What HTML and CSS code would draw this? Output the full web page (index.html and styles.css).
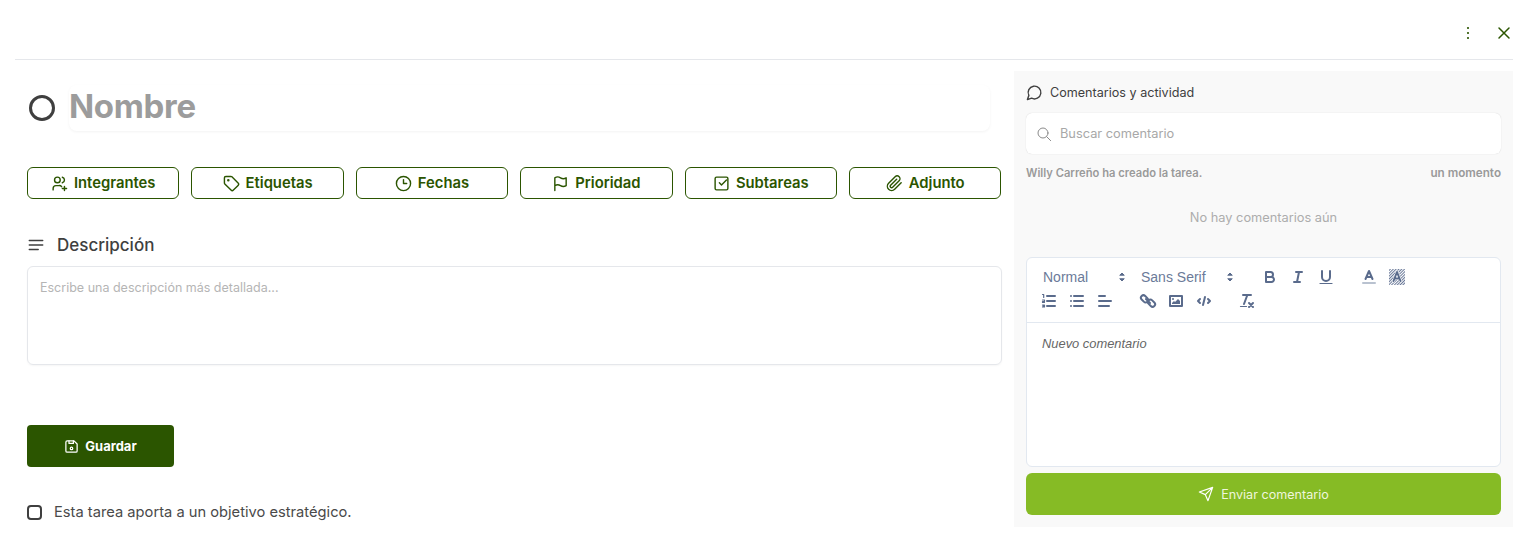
FILE: index.html
```html
<!DOCTYPE html>
<html lang="es">
<head>
<meta charset="utf-8">
<title>Tarea</title>
<link rel="stylesheet" href="styles.css">
</head>
<body>
<div class="modal">
  <header class="topbar">
    <svg class="top-icon" viewBox="0 0 24 24" width="20" height="20"><circle cx="12" cy="6" r="1.300"/><circle cx="12" cy="12" r="1.300"/><circle cx="12" cy="18" r="1.300"/></svg>
    <svg class="top-close" viewBox="0 0 24 24" width="20" height="20"><path d="M6 6l12 12M18 6L6 18"/></svg>
  </header>
  <div class="content">
    <main class="left">
      <div class="title-row">
        <span class="ring"></span>
        <div class="title-input">Nombre</div>
      </div>
      <div class="actions">
        <button class="action"><svg viewBox="0 0 24 24"><circle cx="9" cy="7" r="4"/><path d="M3 21v-2a4 4 0 0 1 4-4h4a4 4 0 0 1 4 1.500M16 3.130a4 4 0 0 1 0 7.750M16 19h6M19 16v6"/></svg>Integrantes</button>
        <button class="action"><svg viewBox="0 0 24 24"><path d="M12.586 2.586A2 2 0 0 0 11.172 2H4a2 2 0 0 0-2 2v7.172a2 2 0 0 0 .586 1.414l8.704 8.704a2.426 2.426 0 0 0 3.420 0l6.580-6.580a2.426 2.426 0 0 0 0-3.420z"/><circle cx="7.500" cy="7.500" r=".8"/></svg>Etiquetas</button>
        <button class="action"><svg viewBox="0 0 24 24"><circle cx="12" cy="12" r="10"/><path d="M12 6.500V12h4.500"/></svg>Fechas</button>
        <button class="action"><svg viewBox="0 0 24 24"><path d="M4 22V4c3-2 5-2 8 0s5 2 8 0v11c-3 2-5 2-8 0s-5-2-8 0"/></svg>Prioridad</button>
        <button class="action"><svg viewBox="0 0 24 24"><path d="M9 11l3 3 7-7"/><path d="M21 5v14a2 2 0 0 1-2 2H5a2 2 0 0 1-2-2V5a2 2 0 0 1 2-2h14a2 2 0 0 1 2 2z"/></svg>Subtareas</button>
        <button class="action"><svg viewBox="0 0 24 24"><path d="M21.400 11.050l-9.200 9.200a6 6 0 0 1-8.500-8.500l9.200-9.200a4 4 0 0 1 5.660 5.660l-9.200 9.200a2 2 0 0 1-2.830-2.830l8.500-8.490"/></svg>Adjunto</button>
      </div>
      <div class="desc-head">
        <svg viewBox="0 0 24 24" width="18" height="18"><path d="M3 6h18M3 12h18M3 18h12"/></svg>
        <h2>Descripción</h2>
      </div>
      <div class="desc-box">Escribe una descripción más detallada...</div>
      <button class="save"><svg viewBox="0 0 24 24" width="15" height="15"><path d="M19 21H5a2 2 0 0 1-2-2V5a2 2 0 0 1 2-2h11l5 5v11a2 2 0 0 1-2 2z"/><path d="M8 3v4h7V3"/><circle cx="12" cy="15" r="2"/></svg>Guardar</button>
      <label class="goal"><span class="check"></span>Esta tarea aporta a un objetivo estratégico.</label>
    </main>
    <aside class="panel">
      <div class="panel-head">
        <svg viewBox="0 0 24 24" width="17" height="17"><path d="M7.900 20A9 9 0 1 0 4 16.100L2 22z"/></svg>
        <span>Comentarios y actividad</span>
      </div>
      <div class="search">
        <svg viewBox="0 0 24 24" width="16" height="16"><circle cx="10.500" cy="10.500" r="7.500"/><path d="M16 16l6 6"/></svg>
        <span>Buscar comentario</span>
      </div>
      <div class="activity"><span>Willy Carreño ha creado la tarea.</span><span class="moment">un momento</span></div>
      <div class="empty">No hay comentarios aún</div>
      <div class="editor">
        <div class="toolbar">
          <div class="tb-row">
            <span class="picker picker-header">Normal<svg viewBox="0 0 18 18"><polygon points="7 11 9 13 11 11"/><polygon points="7 7 9 5 11 7"/></svg></span>
            <span class="picker picker-font">Sans Serif<svg viewBox="0 0 18 18"><polygon points="7 11 9 13 11 11"/><polygon points="7 7 9 5 11 7"/></svg></span>
            <span class="tb-group">
              <span class="tb"><svg viewBox="0 0 18 18"><path d="M5,4H9.500A2.500,2.500,0,0,1,12,6.500v0A2.500,2.500,0,0,1,9.500,9H5V4Z"/><path d="M5,9h5.500A2.500,2.500,0,0,1,13,11.500v0A2.500,2.500,0,0,1,10.500,14H5V9Z"/></svg></span>
              <span class="tb"><svg viewBox="0 0 18 18"><path d="M7 4h6M5 14h6M8 14l2-10"/></svg></span>
              <span class="tb"><svg viewBox="0 0 18 18"><path d="M5,3V9a4,4,0,0,0,4,4h0a4,4,0,0,0,4-4V3"/><path class="thin" d="M3 15.500h12"/></svg></span>
            </span>
            <span class="tb-group">
              <span class="tb"><svg viewBox="0 0 18 18"><path class="label" d="M3 15h12"/><path d="M5.500 11L9 3l3.500 8M11.630 9H6.380"/></svg></span>
              <span class="tb"><svg viewBox="0 0 18 18"><defs><pattern id="hatch" width="2" height="2" patternUnits="userSpaceOnUse" patternTransform="rotate(45)"><rect width="1" height="2" class="hatch"/></pattern></defs><rect class="hatch-fill" x="1" y="1" width="16" height="16" fill="url(#hatch)"/><path class="halo" d="M5.500 13L9 4l3.500 9M11.630 10.500H6.380"/><path d="M5.500 13L9 4l3.500 9M11.630 10.500H6.380"/></svg></span>
            </span>
          </div>
          <div class="tb-row">
            <span class="tb-group">
              <span class="tb"><svg viewBox="0 0 18 18"><path d="M7 4h8M7 9h8M7 14h8"/><path class="thin" d="M2.500 2.500h1.200v3M2.500 8h2v1.500h-2v1h2M2.500 13h2v2h-2M3 14h1.500"/></svg></span>
              <span class="tb"><svg viewBox="0 0 18 18"><path d="M6 4h9M6 9h9M6 14h9M3 4h0M3 9h0M3 14h0"/></svg></span>
              <span class="tb"><svg viewBox="0 0 18 18"><path d="M3 9h12M3 14h10M3 4h6"/></svg></span>
            </span>
            <span class="tb-group">
              <span class="tb"><svg viewBox="0 0 18 18"><path d="M7 7l4 4"/><rect x="1.500" y="4.300" width="8" height="5" rx="2.500" transform="rotate(45 5.500 6.800)"/><rect x="8.500" y="8.700" width="8" height="5" rx="2.500" transform="rotate(45 12.500 11.200)"/></svg></span>
              <span class="tb"><svg viewBox="0 0 18 18"><rect x="3" y="4" width="12" height="10"/><circle class="solid" cx="6" cy="7" r="1"/><polygon class="solid" points="5 12 5 11 7 9 8 10 11 7 13 9 13 12 5 12"/></svg></span>
              <span class="tb"><svg viewBox="0 0 18 18"><path d="M5 7L3 9l2 2M13 7l2 2-2 2M10 5L8 13"/></svg></span>
            </span>
            <span class="tb-group">
              <span class="tb"><svg viewBox="0 0 18 18"><path d="M5 3h8M6 12L9.350 3M11 11l4 4M15 11l-4 4"/><path class="thin" d="M2.500 14.500h6"/></svg></span>
            </span>
          </div>
        </div>
        <div class="editor-body">Nuevo comentario</div>
      </div>
      <button class="send"><svg viewBox="0 0 24 24" width="16" height="16"><path d="M22 2L15 22l-4-9-9-4zM22 2L11 13"/></svg>Enviar comentario</button>
    </aside>
  </div>
</div>
</body>
</html>
```
FILE: styles.css
```css
* { box-sizing: border-box; }
html, body { margin: 0; padding: 0; background: #fff; }
body { width: 1525px; height: 557px; overflow: hidden; font-family: Inter, "Liberation Sans", sans-serif; color: #3f3f3f; }
svg { fill: none; stroke: currentColor; stroke-linecap: round; stroke-linejoin: round; flex: none; }
button { font-family: inherit; }

.modal { padding: 0 12px 0 15px; }
.topbar { height: 60px; border-bottom: 1px solid #e5e7eb; display: flex; align-items: center; justify-content: flex-end; gap: 16px; padding: 6px 0 0; color: #2b5500; margin-bottom: 11px; }
.top-icon { fill: currentColor; stroke: none; }
.top-close { stroke-width: 1.800; margin-right: -1px; }

.content { display: flex; gap: 12px; padding-left: 12px; }
.left { width: 975px; flex: none; }

.title-row { display: flex; align-items: center; gap: 14px; height: 60px; margin-top: 7px; }
.ring { width: 26px; height: 26px; border: 3px solid #3f3f3f; border-radius: 50%; flex: none; margin-left: 2px; }
.title-input { width: 921px; height: 46px; line-height: 42px; font-size: 33px; font-weight: 700; color: #9c9c9c; border-radius: 8px; box-shadow: 0 1px 3px rgba(0,0,0,.05); letter-spacing: -.3px; }

.actions { display: grid; grid-template-columns: repeat(6, 1fr); gap: 12px; margin-top: 29px; padding-right: .6px; }
.action { height: 32px; border: 1px solid #2b5500; border-radius: 6px; background: #fff; color: #2b5500; font-size: 14.800px; font-weight: 600; display: flex; align-items: center; justify-content: center; gap: 6px; padding: 0 0 1px; }
.action svg { width: 17px; height: 17px; stroke-width: 2; margin-top: 1px; }

.desc-head { display: flex; align-items: center; gap: 12px; margin-top: 34px; height: 24px; }
.desc-head h2 { margin: 0; font-size: 17px; font-weight: 500; color: #3f3f3f; }
.desc-head svg { stroke-width: 1.800; }

.desc-box { margin-top: 9px; height: 99px; border: 1px solid #e5e7eb; border-radius: 6px; padding: 13px 12px; font-size: 12.500px; color: #b5b5b5; box-shadow: 0 1px 2px rgba(0,0,0,.04); }

.save { margin-top: 60px; width: 147px; height: 42px; border: 0; border-radius: 4px; background: #2b5500; color: #fff; font-size: 13px; font-weight: 700; display: flex; align-items: center; justify-content: center; gap: 6px; }
.save svg { stroke-width: 2; }

.goal { display: flex; align-items: center; gap: 12px; margin-top: 35px; font-size: 14.700px; color: #4a4a4a; height: 20px; }
.check { width: 15px; height: 15px; border: 2px solid #3f3f3f; border-radius: 4px; flex: none; }

.panel { width: 499px; height: 456px; background: #f9f9f9; padding: 12px; flex: none; }
.panel-head { display: flex; align-items: center; gap: 7px; height: 19px; font-size: 12.600px; font-weight: 400; color: #3f3f3f; }
.panel-head svg { stroke-width: 2; }
.search { margin-top: 11px; height: 41px; background: #fff; border-radius: 6px; box-shadow: 0 0 1px rgba(0,0,0,.2); display: flex; align-items: center; gap: 8px; padding: 0 10px; font-size: 12.800px; color: #a8a8a8; }
.search svg { color: #8a8a8a; stroke-width: 1.500; }
.activity { display: flex; justify-content: space-between; margin-top: 12px; font-size: 11.200px; font-weight: 600; color: #9a9a9a; height: 14px; line-height: 14px; }
.moment { font-size: 11.700px; }
.empty { margin-top: 31px; text-align: center; font-size: 12.800px; color: #adadad; height: 14px; line-height: 14px; }

.editor { margin-top: 32px; height: 210px; background: #fff; border: 1px solid #e2e8f0; border-radius: 6px; display: flex; flex-direction: column; font-family: "Liberation Sans", sans-serif; }
.toolbar { height: 65px; border-bottom: 1px solid #e2e8f0; padding: 7px 8px 0; color: #5a6b8c; }
.tb-row { display: flex; height: 24px; align-items: center; }
.picker { display: flex; align-items: center; justify-content: space-between; height: 24px; padding-left: 8px; padding-right: 2px; font-size: 14px; color: #6b7a99; }
.picker svg { width: 18px; height: 18px; fill: #5a6b8c; stroke: #5a6b8c; stroke-width: 1; }
.picker-header { width: 98px; }
.picker-font { width: 108px; margin-right: 15px; }
.tb-group { display: flex; margin-right: 15px; }
.tb { width: 28px; height: 24px; padding: 3px 5px; display: block; }
.tb svg { width: 18px; height: 18px; stroke-width: 2; display: block; }
.tb .thin { stroke-width: 1.200; }
.tb .label { stroke: #b9c2d0; }
.tb .solid { fill: currentColor; stroke: none; }
.tb .hatch { fill: #6b7a99; stroke: none; }
.tb .hatch-fill { stroke: none; }
.tb .halo { stroke: #fff; stroke-width: 3; }
.editor-body { flex: 1; padding: 13px 15px; font-size: 12.900px; font-style: italic; color: #666; }

.send { margin-top: 6px; width: 100%; height: 42px; border: 0; border-radius: 6px; background: #86bb25; color: #eef6dc; font-size: 12.600px; font-weight: 400; display: flex; align-items: center; justify-content: center; gap: 7px; }
.send svg { stroke-width: 1.800; color: #fff; }
```
